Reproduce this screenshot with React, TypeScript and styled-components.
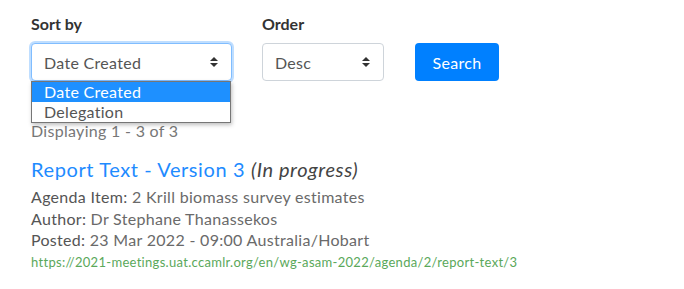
import React from "react";
import styled, { createGlobalStyle } from "styled-components";

const Global = createGlobalStyle`
  body {
    margin: 0;
    background: #fff;
    font-family: "Lato", "Open Sans", sans-serif;
    color: #555;
  }
`;

const Page = styled.div`
  padding: 14px 31px 0;
`;

const Filters = styled.div`
  display: flex;
  align-items: flex-end;
  gap: 30px;
`;

const Field = styled.div`
  display: flex;
  flex-direction: column;
  position: relative;
`;

const Label = styled.label`
  font-size: 16px;
  font-weight: 700;
  color: #333;
  line-height: 20px;
  margin-bottom: 9px;
`;

const SelectBox = styled.div<{ $width: number; $focused?: boolean }>`
  box-sizing: border-box;
  width: ${(p) => p.$width}px;
  height: 38px;
  display: flex;
  align-items: center;
  justify-content: space-between;
  padding: 0 12px;
  font-size: 16px;
  letter-spacing: 0.3px;
  color: #555;
  background: #fff;
  border: 1px solid ${(p) => (p.$focused ? "#80bdff" : "#ced4da")};
  border-radius: 4px;
  box-shadow: ${(p) => (p.$focused ? "0 0 0 2px rgba(0,123,255,.25)" : "none")};
`;

const Menu = styled.div`
  position: absolute;
  top: 100%;
  left: 0;
  width: 200px;
  box-sizing: border-box;
  border: 1px solid #767676;
  background: #fff;
  box-shadow: 1px 2px 4px rgba(0, 0, 0, 0.25);
  z-index: 2;
`;

const Option = styled.div<{ $active?: boolean }>`
  height: 20px;
  line-height: 20px;
  padding-left: 12px;
  font-size: 16px;
  letter-spacing: 0.3px;
  color: ${(p) => (p.$active ? "#fff" : "#555")};
  background: ${(p) => (p.$active ? "#1e90ff" : "#fff")};
`;

const Button = styled.button`
  height: 38px;
  width: 84px;
  border: none;
  border-radius: 4px;
  background: #0080ff;
  color: #fff;
  font-family: inherit;
  font-size: 16px;
  letter-spacing: 0.3px;
  margin-left: 1px;
`;

const Count = styled.div`
  margin-top: 40px;
  font-size: 16px;
  color: #777;
  line-height: 20px;
  letter-spacing: 0.3px;
`;

const Result = styled.div`
  margin-top: 15px;
`;

const Title = styled.div`
  font-size: 20px;
  line-height: 26px;
  color: #1e8bff;
  margin-bottom: 4px;
  letter-spacing: 0.6px;
`;

const Status = styled.em`
  color: #444;
`;

const Meta = styled.div`
  font-size: 16px;
  line-height: 21.5px;
  color: #6a6a6a;
  letter-spacing: 0.3px;
`;

const MetaLabel = styled.span`
  color: #555;
`;

const Url = styled.div`
  font-size: 13px;
  color: #5aa85a;
  margin-top: 3px;
  letter-spacing: 0.3px;
`;

const Arrows = () => (
  <svg width="10" height="14" viewBox="0 0 10 14">
    <path d="M1 6 L5 2 L9 6 Z M1 8 L5 12 L9 8 Z" fill="#333" />
  </svg>
);

const App: React.FC = () => {
  return (
    <Page>
      <Global />
      <Filters>
        <Field>
          <Label>Sort by</Label>
          <SelectBox $width={201} $focused>
            <span>Date Created</span>
            <Arrows />
          </SelectBox>
          <Menu>
            <Option $active>Date Created</Option>
            <Option>Delegation</Option>
          </Menu>
        </Field>
        <Field>
          <Label>Order</Label>
          <SelectBox $width={122}>
            <span>Desc</span>
            <Arrows />
          </SelectBox>
        </Field>
        <Button>Search</Button>
      </Filters>
      <Count>Displaying 1 - 3 of 3</Count>
      <Result>
        <Title>
          Report Text - Version 3 <Status>(In progress)</Status>
        </Title>
        <Meta>
          <MetaLabel>Agenda Item:</MetaLabel> 2 Krill biomass survey estimates
        </Meta>
        <Meta>
          <MetaLabel>Author:</MetaLabel> Dr Stephane Thanassekos
        </Meta>
        <Meta>
          <MetaLabel>Posted:</MetaLabel> 23 Mar 2022 - 09:00 Australia/Hobart
        </Meta>
        <Url>https://2021-meetings.uat.ccamlr.org/en/wg-asam-2022/agenda/2/report-text/3</Url>
      </Result>
    </Page>
  );
};

export default App;
